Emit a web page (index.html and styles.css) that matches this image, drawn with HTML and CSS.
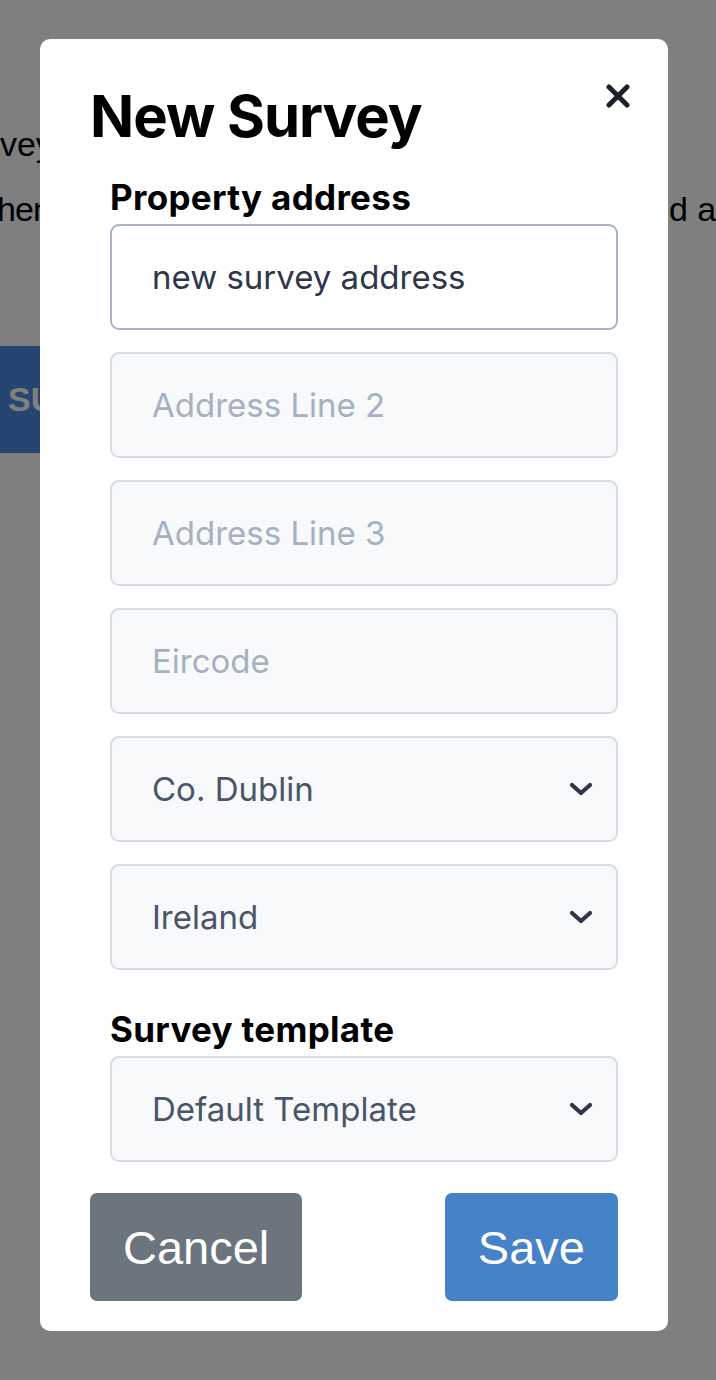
FILE: index.html
```html
<!DOCTYPE html>
<html lang="en">
<head>
<meta charset="utf-8">
<title>New Survey</title>
<link rel="stylesheet" href="styles.css">
</head>
<body>
<div class="page">
  <div class="bg-line bg-line-1">Surveys</div>
  <div class="bg-line bg-line-2"><span class="bg-left">When you have created a survey it will be listed here, get starte</span><span class="bg-right">d and add a new survey</span></div>
  <div class="bg-btn">SURVEYS</div>
</div>

<div class="overlay">
  <div class="modal">
    <div class="modal-head">
      <h1 class="title">New Survey</h1>
      <button class="close" type="button" aria-label="Close">
        <svg viewBox="0 0 26 24" width="26" height="24"><path d="M4 3 L22 21 M22 3 L4 21" stroke="#1a202c" stroke-width="5" stroke-linecap="round" fill="none"/></svg>
      </button>
    </div>
    <form class="form">
      <div class="group">
        <label class="label">Property address</label>
        <div class="fields">
          <input class="field field-active" type="text" value="new survey address">
          <input class="field" type="text" placeholder="Address Line 2">
          <input class="field" type="text" placeholder="Address Line 3">
          <input class="field" type="text" placeholder="Eircode">
          <div class="select-wrap">
            <select class="field select"><option>Co. Dublin</option></select>
            <svg class="chev" viewBox="0 0 24 14" width="24" height="14"><path d="M3 3 L12 11 L21 3" stroke="#2d3748" stroke-width="4.2" stroke-linecap="round" stroke-linejoin="round" fill="none"/></svg>
          </div>
          <div class="select-wrap">
            <select class="field select"><option>Ireland</option></select>
            <svg class="chev" viewBox="0 0 24 14" width="24" height="14"><path d="M3 3 L12 11 L21 3" stroke="#2d3748" stroke-width="4.2" stroke-linecap="round" stroke-linejoin="round" fill="none"/></svg>
          </div>
        </div>
      </div>
      <div class="group group-2">
        <label class="label">Survey template</label>
        <div class="select-wrap">
          <select class="field select"><option>Default Template</option></select>
          <svg class="chev" viewBox="0 0 24 14" width="24" height="14"><path d="M3 3 L12 11 L21 3" stroke="#2d3748" stroke-width="4.2" stroke-linecap="round" stroke-linejoin="round" fill="none"/></svg>
        </div>
      </div>
    </form>
    <div class="actions">
      <button class="btn btn-cancel" type="button">Cancel</button>
      <button class="btn btn-save" type="button">Save</button>
    </div>
  </div>
</div>
</body>
</html>
```
FILE: styles.css
```css
html, body {
  margin: 0;
  padding: 0;
  background: #ffffff;
  overflow: hidden;
}

body {
  width: 716px;
  height: 1380px;
  font-family: "Liberation Sans", Arial, sans-serif;
}

.page {
  padding-top: 122px;
  color: #000;
  font-size: 34px;
  overflow: hidden;
}

.bg-line {
  white-space: nowrap;
  line-height: 44px;
}

.bg-line-1 {
  margin-left: -53px;
}

.bg-line-2 {
  margin-top: 21px;
  display: flex;
  margin-left: -34px;
}

.bg-left {
  flex: 0 0 702px;
  overflow: hidden;
  letter-spacing: -1px;
}

.bg-right {
  flex: 0 0 auto;
  padding-left: 1px;
}

.bg-btn {
  margin-top: 115px;
  margin-left: -22px;
  display: inline-block;
  height: 107px;
  line-height: 107px;
  padding: 0 30px;
  background: #4c8ae0;
  color: #fff;
  font-weight: bold;
  font-size: 34px;
  border-radius: 6px;
}

.overlay {
  position: fixed;
  inset: 0;
  background: rgba(0, 0, 0, 0.5);
  display: flex;
  justify-content: flex-start;
  align-items: flex-start;
  padding: 39px 0 0 40px;
}

.modal {
  position: relative;
  box-sizing: border-box;
  width: 628px;
  background: #ffffff;
  border-radius: 10px;
  padding: 43px 50px 30px 50px;
  font-family: Inter, "Liberation Sans", sans-serif;
}

.modal-head {
  display: flex;
}

.title {
  margin: 0;
  font-size: 58px;
  line-height: 68px;
  font-weight: 700;
  color: #000;
  letter-spacing: -1px;
}

.close {
  position: absolute;
  top: 45px;
  right: 37px;
  padding: 0;
  border: 0;
  background: none;
  line-height: 0;
}

.form {
  margin-top: 27px;
  padding-left: 20px;
  display: flex;
  flex-direction: column;
  gap: 39px;
}

.group {
  display: flex;
  flex-direction: column;
  gap: 7px;
}

.label {
  font-size: 35px;
  line-height: 40px;
  font-weight: 700;
  color: #000;
  letter-spacing: 0.3px;
}

.fields {
  display: flex;
  flex-direction: column;
  gap: 22px;
}

.field {
  box-sizing: border-box;
  width: 508px;
  height: 106px;
  margin: 0;
  padding: 0 40px;
  border: 2px solid #d5dce6;
  border-radius: 9px;
  background: #f7f9fb;
  font-family: Inter, "Liberation Sans", sans-serif;
  font-size: 33px;
  color: #4a5568;
  outline: none;
}

.field::placeholder {
  color: #a5b1c2;
}

.field-active {
  background: #ffffff;
  border-color: #a7b3c4;
  color: #2d3748;
}

.select-wrap {
  position: relative;
}

.select {
  -webkit-appearance: none;
  appearance: none;
  display: block;
}

.chev {
  position: absolute;
  right: 25px;
  top: 46px;
  pointer-events: none;
}

.actions {
  margin-top: 31px;
  display: flex;
  justify-content: space-between;
}

.btn {
  height: 108px;
  padding: 0 33px;
  border: 0;
  border-radius: 7px;
  color: #ffffff;
  font-family: "Liberation Sans", Arial, sans-serif;
  font-size: 47px;
}

.btn-cancel {
  background: #6c757d;
}

.btn-save {
  background: #4682c8;
}
```
